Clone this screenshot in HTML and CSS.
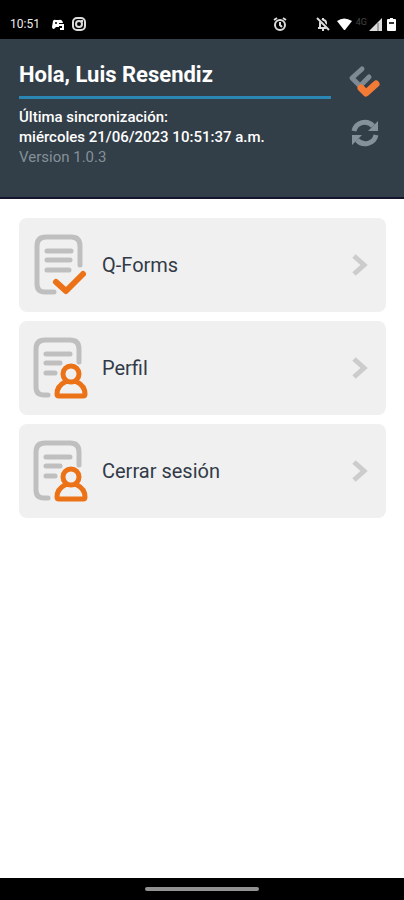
FILE: index.html
```html
<!DOCTYPE html>
<html lang="es">
<head>
    <meta charset="UTF-8">
    <meta name="viewport" content="width=device-width, initial-scale=1.0">
    <title>Q-Forms</title>
    <link rel="stylesheet" href="styles.css">
</head>
<body>
    <div class="status-bar">
        <span class="time">10:51</span>
        <svg class="status-game" width="14" height="12" viewBox="0 0 14 12">
            <path d="M1 9L2 3Q3 1 5 2H8Q11 1 12 5H8V9H5L3 11Q1 11 1 9Z" fill="#fff"/>
            <path d="M8 7H12V11H9" fill="none" stroke="#fff" stroke-width="2"/>
            <circle cx="5" cy="5" r="1" fill="#000"/>
        </svg>
        <svg width="14" height="14" viewBox="0 0 14 14" fill="none" stroke="#ddd" stroke-width="2">
            <rect x="1" y="1" width="12" height="12" rx="4"/>
            <circle cx="7" cy="7" r="3"/>
            <path d="M9 4h2"/>
        </svg>
        <div class="status-right">
            <svg class="status-alarm" width="14" height="14" viewBox="0 0 14 14" fill="none" stroke="#ddd" stroke-width="2">
                <circle cx="7" cy="8" r="5"/>
                <path d="M1 3L4 1M13 3L10 1M7 5V8L9 10"/>
            </svg>
            <svg width="14" height="14" viewBox="0 0 14 14">
                <path d="M4 10V6Q4 3 7 3T10 6V10M2 11H12" fill="none" stroke="#ddd" stroke-width="2"/>
                <path d="M6 1H8V3H6ZM6 12H8V14H6Z" fill="#ddd"/>
                <path d="M2 1L13 12" stroke="#000" stroke-width="3"/>
                <path d="M1 1L13 13" stroke="#ddd" stroke-width="2"/>
            </svg>
            <svg class="status-wifi" width="15" height="12" viewBox="0 0 15 12">
                <path d="M0 3Q7 -2 15 3L8 12H7Z" fill="#fff"/>
            </svg>
            <span class="network">4G</span>
            <svg width="13" height="13" viewBox="0 0 13 13">
                <path d="M0 13L13 0V13Z" fill="#ddd"/>
                <path d="M9 5V13" stroke="#666"/>
            </svg>
            <svg class="status-battery" width="9" height="13" viewBox="0 0 9 13">
                <path d="M3 0H6V1H8Q9 1 9 2V12Q9 13 8 13H1Q0 13 0 12V2Q0 1 1 1H3Z" fill="#fff"/>
                <path d="M2 4H7V6H2Z" fill="#333"/>
            </svg>
        </div>
    </div>

    <header class="header">
        <div class="user-info">
            <h1>Hola, Luis Resendiz</h1>
            <p class="sync">Última sincronización:<br>miércoles 21/06/2023 10:51:37 a.m.</p>
            <p class="version">Version 1.0.3</p>
        </div>
        <div class="header-actions">
            <svg width="32" height="32" viewBox="0 0 32 32" fill="none" stroke-linecap="round" stroke-linejoin="round">
                <path d="M13 4L3 13L11 21L20 12" stroke="#7d8a93" stroke-width="5"/>
                <path d="M12 23L17 28L27 19" stroke="#f47b35" stroke-width="7"/>
            </svg>
            <button class="sync-button" type="button" aria-label="Sincronizar">
                <svg width="28" height="28" viewBox="0 0 28 28" fill="none" stroke="#84919a" stroke-width="5">
                    <path d="M3 12A11 11 0 0 1 22 7M25 16A11 11 0 0 1 6 21"/>
                    <path d="M27 2V12H17ZM1 26V16H11Z" fill="#84919a" stroke="none"/>
                </svg>
            </button>
        </div>
    </header>

    <main class="menu">
        <a class="menu-item" href="#forms">
            <svg class="menu-icon" width="54" height="62" viewBox="0 0 54 62">
                <path class="page-line" d="M46 31V12Q46 3 37 3H12Q3 3 3 12V50Q3 58 11 58H20M13 17H37M13 26H36M13 36H35"/>
                <path class="check" d="M22 48L32 57L49 40"/>
            </svg>
            <span>Q-Forms</span>
            <svg class="arrow" width="16" height="22" viewBox="0 0 16 22"><path d="M2 2L12 11L2 20"/></svg>
        </a>
        <a class="menu-item" href="#perfil">
            <svg class="menu-icon" width="54" height="62" viewBox="0 0 54 62">
                <path class="page-line" d="M45 25V12Q45 3 36 3H11Q2 3 2 12V50Q2 58 10 58H14M12 17H36M12 26H26M12 36H21"/>
                <path class="person" d="M29 37A8 8 0 1 1 45 37A8 8 0 1 1 29 37ZM31 45Q23 49 23 57Q23 59 25 59H49Q51 59 51 57Q51 49 43 45"/>
            </svg>
            <span>Perfil</span>
            <svg class="arrow" width="16" height="22" viewBox="0 0 16 22"><path d="M2 2L12 11L2 20"/></svg>
        </a>
        <a class="menu-item" href="#salir">
            <svg class="menu-icon" width="54" height="62" viewBox="0 0 54 62">
                <path class="page-line" d="M45 25V12Q45 3 36 3H11Q2 3 2 12V50Q2 58 10 58H14M12 17H36M12 26H26M12 36H21"/>
                <path class="person" d="M29 37A8 8 0 1 1 45 37A8 8 0 1 1 29 37ZM31 45Q23 49 23 57Q23 59 25 59H49Q51 59 51 57Q51 49 43 45"/>
            </svg>
            <span>Cerrar sesión</span>
            <svg class="arrow" width="16" height="22" viewBox="0 0 16 22"><path d="M2 2L12 11L2 20"/></svg>
        </a>
    </main>

    <div class="nav-bar">
        <div class="nav-handle"></div>
    </div>
</body>
</html>
```

FILE: styles.css
```css
* {
    box-sizing: border-box;
}
body {
    display: flex;
    flex-direction: column;
    min-height: 100vh;
    margin: 0;
    font-family: Roboto, "Noto Sans", sans-serif;
    background-color: #fff;
}
svg {
    display: block;
    flex-shrink: 0;
    overflow: visible;
}
.status-bar {
    display: flex;
    align-items: center;
    height: 39px;
    padding: 9px 8px 0 10px;
    background-color: #000;
    color: #eee;
    font-size: 12px;
}
.status-game {
    margin: 0 7px 0 11px;
}
.status-right {
    display: flex;
    align-items: center;
    margin-left: auto;
}
.status-alarm {
    margin-right: 29px;
}
.status-wifi {
    margin: 0 4px 0 7px;
}
.network {
    margin-right: 2px;
    color: #444;
    font-size: 9px;
    line-height: 12px;
    padding-bottom: 4px;
}
.status-battery {
    margin-left: 5px;
}
.header {
    display: flex;
    justify-content: space-between;
    min-height: 160px;
    padding: 21px 23px 19px 19px;
    background-color: #323e48;
    border-bottom: 2px solid #14142c;
    color: #fff;
}
.user-info {
    flex: 1;
    margin-right: 18px;
}
h1 {
    margin: 0 0 8px;
    padding-bottom: 6px;
    border-bottom: 3px solid #2a87b4;
    font-size: 22px;
    font-weight: 700;
    line-height: 30px;
}
.sync, .version {
    margin: 0;
    font-size: 15px;
    line-height: 20px;
}
.sync {
    font-weight: 500;
}
.version {
    color: #84919a;
}
.header-actions {
    display: flex;
    flex-direction: column;
    align-items: center;
    gap: 22px;
    padding-top: 5px;
}
.sync-button {
    padding: 0;
    border: 0;
    background: none;
    cursor: pointer;
}
.menu {
    display: flex;
    flex: 1;
    flex-direction: column;
    gap: 9px;
    padding: 19px 18px 19px 19px;
}
.menu-item {
    display: flex;
    align-items: center;
    gap: 14px;
    height: 94px;
    padding: 0 18px 0 15px;
    border-radius: 8px;
    background-color: #f0f0f0;
    color: #323a48;
    font-size: 20px;
    text-decoration: none;
}
.menu-icon {
    fill: none;
    stroke-width: 4;
    stroke-linecap: round;
    stroke-linejoin: round;
}
.page-line {
    stroke: #bfbfbf;
    stroke-width: 5;
}
.check, .person {
    stroke: #ec7218;
}
.check {
    stroke-width: 6;
}
.person {
    stroke-width: 5;
}
.arrow {
    margin-left: auto;
    fill: none;
    stroke: #ccc;
    stroke-width: 5;
}
.nav-bar {
    display: flex;
    align-items: center;
    justify-content: center;
    height: 22px;
    background-color: #000;
}
.nav-handle {
    width: 28%;
    height: 4px;
    border-radius: 2px;
    background-color: #929292;
}
```
